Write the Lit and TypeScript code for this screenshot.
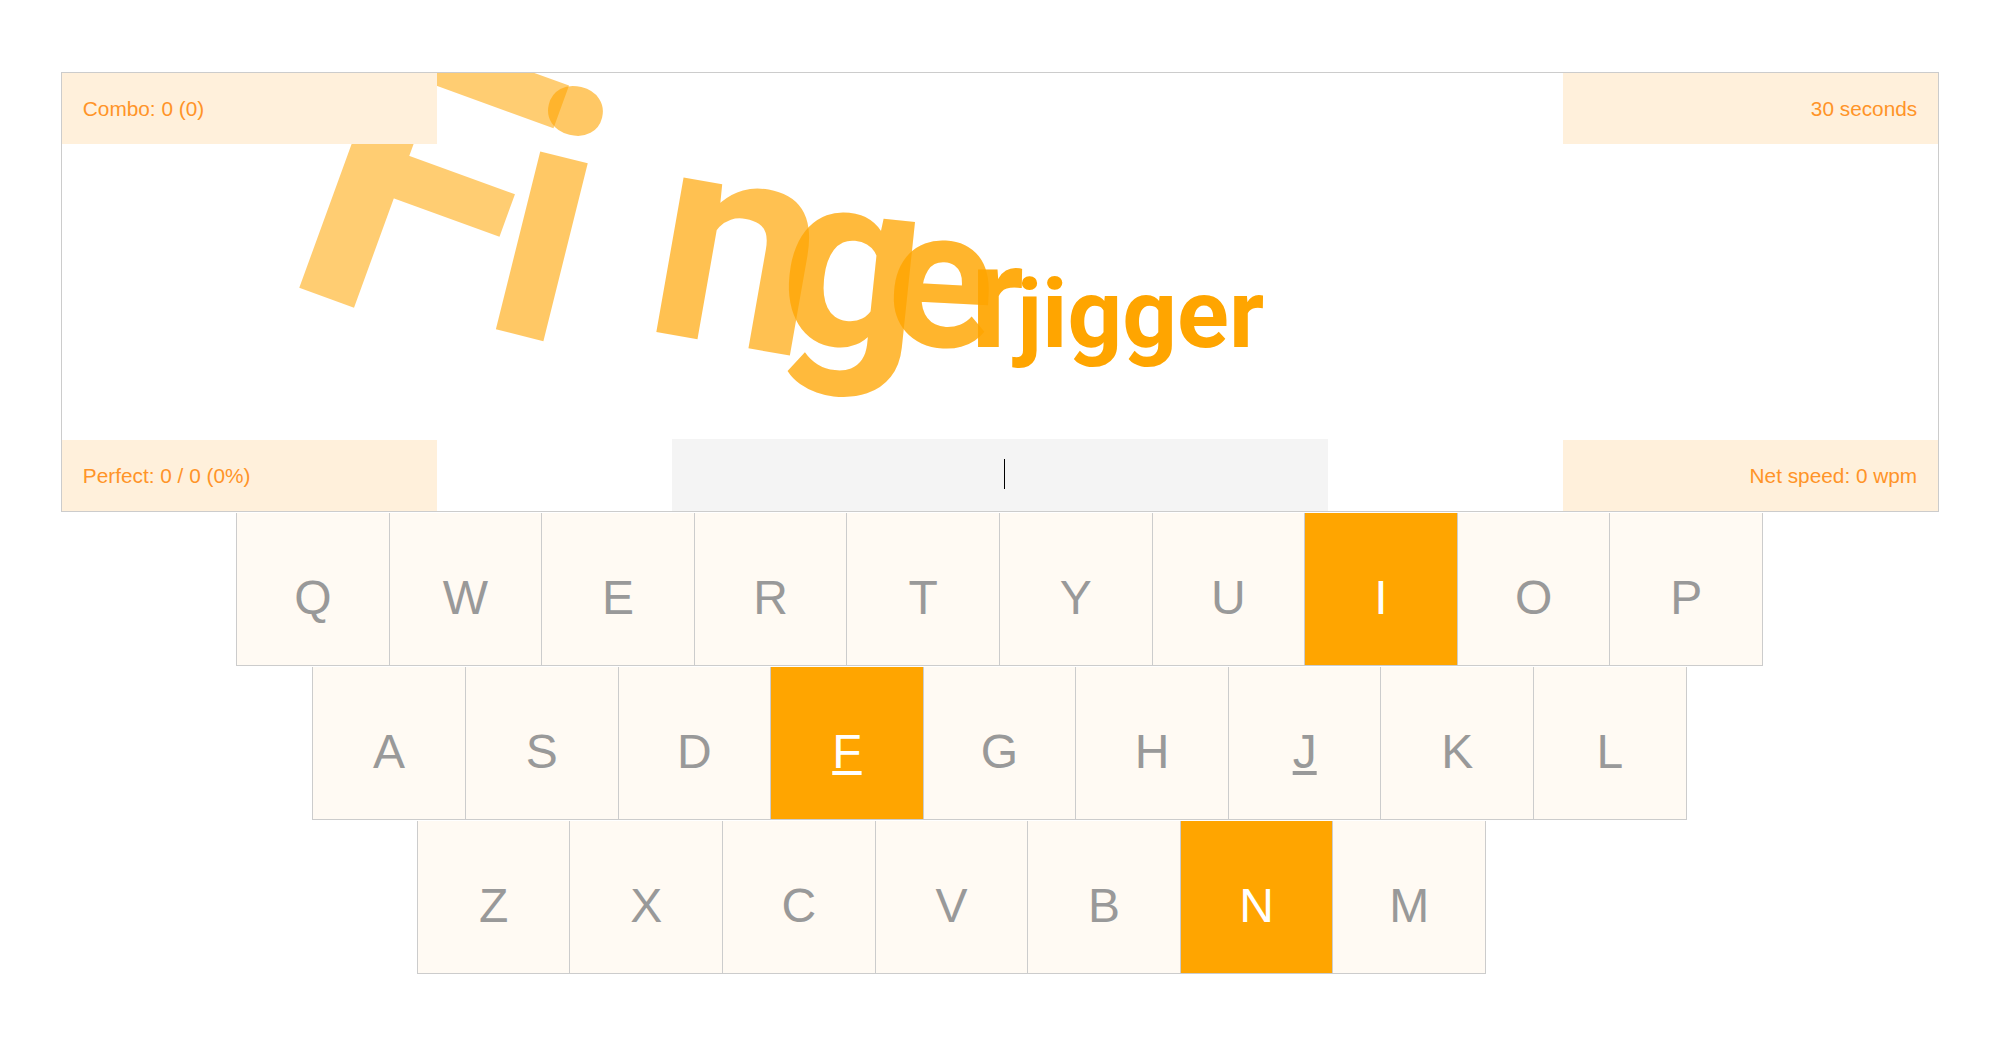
import { LitElement, html, css, svg } from "lit";
import { customElement } from "lit/decorators.js";

const ROWS = ["QWERTYUIOP", "ASDFGHJKL", "ZXCVBNM"];
const ACTIVE = "FIN";
const HOME = "FJ";

const LETTERS = [
  { c: "F", size: 397, x: 275.7, y: 279.2, rot: 20, op: 0.55 },
  { c: "i", size: 347, x: 475, y: 324.1, rot: 14, op: 0.6 },
  { c: "n", size: 297, x: 641.2, y: 329.4, rot: 10, op: 0.68 },
  { c: "g", size: 247, x: 774.5, y: 338.5, rot: 6, op: 0.76 },
  { c: "e", size: 197, x: 884.5, y: 343.5, rot: 3, op: 0.82 },
  { c: "r", size: 147, x: 970, y: 347, rot: 0, op: 0.92 },
];

@customElement("app-root")
export class AppRoot extends LitElement {
  static styles = css`
    :host {
      display: block;
      padding-top: 72px;
      background: #fff;
      font-family: "Liberation Sans", Arial, sans-serif;
    }
    .stage {
      position: relative;
      box-sizing: border-box;
      height: 440px;
      margin: 0 61px;
      border: 1px solid #ccc;
      overflow: hidden;
    }
    .logo {
      position: absolute;
      inset: 0;
      width: 100%;
      height: 100%;
    }
    .logo text {
      font-family: Roboto, sans-serif;
      font-weight: 700;
      fill: #ffa500;
    }
    .stat {
      position: absolute;
      box-sizing: border-box;
      width: 20%;
      height: 71px;
      padding: 0 20.8px;
      display: flex;
      align-items: center;
      background: #fff0db;
      color: #ff9428;
      font-size: 20.8px;
    }
    .tl { top: 0; left: 0; }
    .tr { top: 0; right: 0; justify-content: flex-end; }
    .bl { bottom: 0; left: 0; }
    .br { bottom: 0; right: 0; justify-content: flex-end; }
    .entry {
      position: absolute;
      bottom: 0;
      left: 32.5%;
      width: 35%;
      height: 72px;
      padding: 0 0 2px 10px;
      box-sizing: border-box;
      display: flex;
      align-items: center;
      justify-content: center;
      background: #f4f4f4;
    }
    .caret {
      width: 1px;
      height: 30px;
      background: #000;
    }
    .keyboard {
      display: flex;
      flex-direction: column;
      gap: 1px;
      margin-top: 1px;
    }
    .row {
      display: flex;
      justify-content: center;
    }
    .row.first { padding-right: 1px; }
    .row.second { padding-right: 1px; }
    .row.third { padding-right: 97.2px; }
    .key {
      box-sizing: border-box;
      width: 152.6px;
      height: 153px;
      padding-top: 16px;
      display: flex;
      align-items: center;
      justify-content: center;
      background: #fffaf3;
      border-left: 1px solid #ccc;
      border-bottom: 1px solid #ccc;
      color: #999;
      font-size: 48px;
    }
    .key:last-child {
      width: 153.6px;
      border-right: 1px solid #ccc;
    }
    .key.active {
      background: #ffa500;
      color: #fff;
    }
    .key.home span {
      text-decoration: underline;
    }
  `;

  render() {
    const rowNames = ["first", "second", "third"];
    return html`
      <div class="stage">
        <svg class="logo" viewBox="62 73 1876 438" aria-label="Fingerjigger">
          ${LETTERS.map(
            (l) => svg`<text x=${l.x} y=${l.y} font-size=${l.size} opacity=${l.op}
              transform="rotate(${l.rot} ${l.x} ${l.y})">${l.c}</text>`
          )}
          <text x="1017" y="347" font-size="96">jigger</text>
        </svg>
        <div class="stat tl">Combo: 0 (0)</div>
        <div class="stat tr">30 seconds</div>
        <div class="stat bl">Perfect: 0 / 0 (0%)</div>
        <div class="stat br">Net speed: 0 wpm</div>
        <div class="entry"><div class="caret"></div></div>
      </div>
      <div class="keyboard">
        ${ROWS.map(
          (row, i) => html`<div class="row ${rowNames[i]}">
            ${[...row].map(
              (k) => html`<div
                class="key ${ACTIVE.includes(k) ? "active" : ""} ${HOME.includes(k) ? "home" : ""}"
              ><span>${k}</span></div>`
            )}
          </div>`
        )}
      </div>
    `;
  }
}
